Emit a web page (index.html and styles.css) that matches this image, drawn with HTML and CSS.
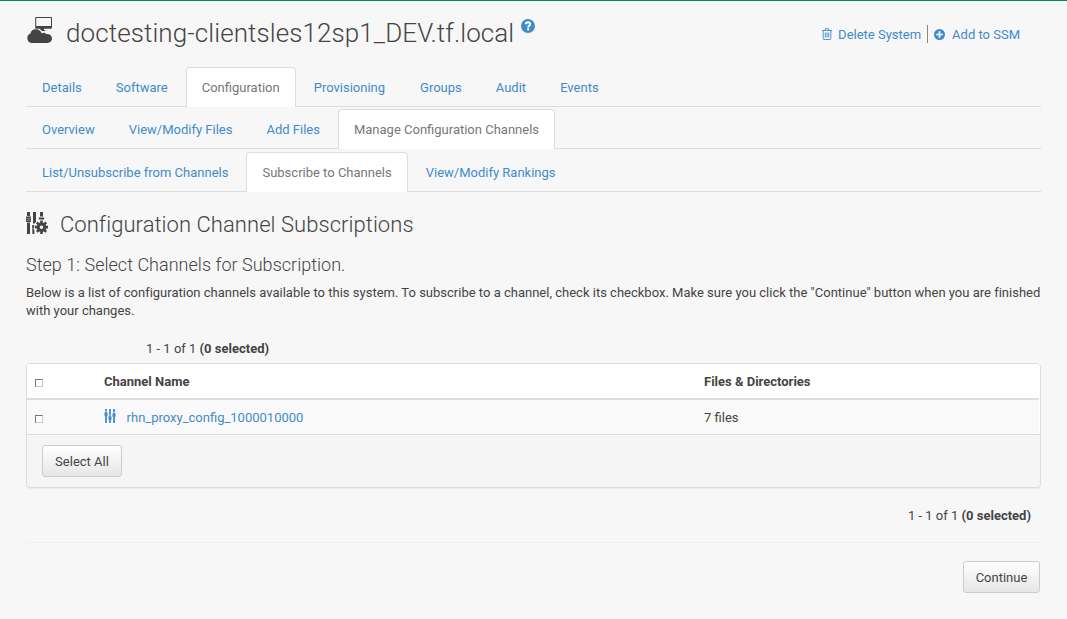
FILE: index.html
```html
<!DOCTYPE html>
<html lang="en">
<head>
<meta charset="utf-8">
<title>Configuration Channel Subscriptions</title>
<link rel="stylesheet" href="styles.css">
</head>
<body>
<main class="page">
  <header class="header">
    <svg class="system-icon" viewBox="0 0 26 26"><path fill="#444" fill-rule="evenodd" d="M10.2 0h15a.8.8 0 0 1 .8.8v9.800a1.200 1.200 0 0 1-1.200 1.200H18v1l2 1.200h-4L13.600 11.800H9.200V1a1 1 0 0 1 1-1zM10.200 1v8h14.800V1z"/><path fill="#444" d="M5 26a5 5 0 0 1-.6-9.400C4.800 13.500 7.500 12 10 12.200c3 .1 5 1.600 5.700 4.200 1.500-1.200 3.300-1 4.700.8a4.500 4.500 0 0 1 5.600 4.400c0 2.600-2 4.400-4.600 4.400z"/></svg>
    <h1 class="title">doctesting-clientsles12sp1_DEV.tf.local</h1>
    <svg class="help-icon" viewBox="0 0 14 14"><circle cx="7" cy="7" r="7" fill="#428bca"/><path d="M4.800 5.200C4.900 2.700 9.300 2.700 9.200 5.200c0 1.500-2 1.400-2 3.200" fill="none" stroke="#fff" stroke-width="2"/><path fill="#fff" d="M6.100 9.300h2.100v2H6.100z"/></svg>
    <nav class="actions">
      <a class="action"><svg class="trash-icon" viewBox="0 0 10 12"><path d="M0 2.500h10M3 2.500l.6-1.900h2.800L7 2.500M1.200 2.500v8.200q0 .8.800.8h6q.8 0 .8-.8V2.500M3.300 4.500v5M5 4.500v5M6.700 4.500v5" fill="none" stroke="#428bca" stroke-width=".9"/></svg>Delete System</a>
      <a class="action action-add"><svg class="plus-icon" viewBox="0 0 11 11"><circle cx="5.500" cy="5.500" r="5.500" fill="#428bca"/><path d="M5.500 2.300v6.400M2.300 5.500h6.400" stroke="#fff" stroke-width="1.700"/></svg>Add to SSM</a>
    </nav>
  </header>
  <nav class="tabs tabs-first"><a class="tab">Details</a><a class="tab">Software</a><a class="tab active">Configuration</a><a class="tab tab-wide">Provisioning</a><a class="tab">Groups</a><a class="tab">Audit</a><a class="tab">Events</a></nav>
  <nav class="tabs tabs-second"><a class="tab">Overview</a><a class="tab">View/Modify Files</a><a class="tab">Add Files</a><a class="tab active">Manage Configuration Channels</a></nav>
  <nav class="tabs tabs-third"><a class="tab">List/Unsubscribe from Channels</a><a class="tab active">Subscribe to Channels</a><a class="tab">View/Modify Rankings</a></nav>
  <div class="section-head">
    <svg class="config-icon" viewBox="0 0 22 22"><g fill="#444"><path d="M1 0h3v4H1zM0 4.500h5V10H0zM1 10.500h3V22H1zM7 0h3v10L8.500 11.500H7zM6.200 13h2v2l-.8 1.500 1 2V22h-2zM14 0h3v4.500h-3zM12.800 5.500h5.400v2h-5.400z"/><path fill-rule="evenodd" d="M14.200 8.500h2.600v2l1 .4 1.500-1.400 1.700 1.700-1.300 1.500.4 1.100H22v2.700h-1.900l-.4 1 1.300 1.500-1.700 1.800-1.500-1.400-1 .4V22h-2.600v-2.200l-1-.4-1.500 1.400-1.700-1.800 1.300-1.500-.4-1H8.900v-2.700h2l.4-1.100-1.300-1.500 1.700-1.700 1.500 1.400 1-.4zM15.500 13.400a1.800 1.800 0 1 0 0 3.600 1.800 1.800 0 0 0 0-3.600z"/></g><path d="M0 6.500h5M0 8.300h5" stroke="#bbb" stroke-width=".5"/></svg>
    <h2 class="section-title">Configuration Channel Subscriptions</h2>
  </div>
  <h3 class="step">Step 1: Select Channels for Subscription.</h3>
  <p class="summary">Below is a list of configuration channels available to this system. To subscribe to a channel, check its checkbox. Make sure you click the "Continue" button when you are finished with your changes.</p>
  <div class="count count-top">1 - 1 of 1 <strong>(0 selected)</strong></div>
  <section class="panel">
    <div class="row row-head"><span class="check"></span><span class="name">Channel Name</span><span class="files">Files &amp; Directories</span></div>
    <div class="row row-item"><span class="check"></span><a class="name link"><svg class="channel-icon" viewBox="0 0 12 14"><path d="M2 0v14M6 0v14M10 0v14" stroke="#428bca" stroke-width="1.800"/><path d="M.5 3.200h3v3.600h-3zM4.500 7.300h3v3.600h-3zM8.500 4.200h3v3.600h-3z" fill="#428bca"/><path d="M.4 2.700h3.200M4.400 6.800h3.200M8.400 3.700h3.200" stroke="#f9f9f9" stroke-width=".6"/></svg>rhn_proxy_config_1000010000</a><span class="files">7 files</span></div>
    <div class="panel-foot"><button class="btn">Select All</button></div>
  </section>
  <div class="count count-bottom">1 - 1 of 1 <strong>(0 selected)</strong></div>
  <div class="submit"><button class="btn btn-continue">Continue</button></div>
</main>
</body>
</html>
```
FILE: styles.css
```css
* { box-sizing: border-box; }
body { margin: 0; background: #f7f7f7; color: #444; font: 13px/18px Roboto, sans-serif; }
h1, h2, h3, p { margin: 0; font-weight: 300; }
svg { display: block; flex: none; }
.page { height: 619px; padding: 0 26px; border-top: 1px solid #008b5d; }
.header { display: flex; height: 66px; }
.system-icon { width: 26px; height: 26px; margin-top: 16px; }
.title { margin: 14px 0 0 14px; width: 448px; font-size: 26px; line-height: 36px; letter-spacing: .09px; white-space: nowrap; }
.help-icon { width: 14px; height: 14px; margin: 18px 0 0 7px; }
.actions { display: flex; margin: 24px 21px 0 auto; height: 18px; }
.action { display: flex; align-items: center; height: 20px; color: #428bca; white-space: nowrap; }
.action-add { height: 18px; padding: 2px 0 0 6px; border-left: 1px solid #888; margin-left: 6px; }
.trash-icon { width: 10px; height: 12px; margin: -2px 6px 0 0; }
.plus-icon { width: 11px; height: 11px; margin: -1px 7px 0 0; }
.tabs { display: flex; height: 40px; border-bottom: 1px solid #ddd; }
.tabs-second { margin-top: 2px; }
.tabs-third { margin-top: 3px; }
.tab { height: 40px; margin-right: 2px; padding: 11px 15px 0; border: 1px solid transparent; border-bottom: 0; color: #428bca; white-space: nowrap; }
.tab-wide { margin-right: 3px; }
.tab.active { background: #fff; border-color: #ddd; border-radius: 4px 4px 0 0; color: #777; }
.section-head { display: flex; height: 30px; margin-top: 17px; }
.config-icon { width: 22px; height: 22px; margin-top: 3px; }
.section-title { margin: 1px 0 0 12px; font-size: 22px; line-height: 30px; letter-spacing: .05px; }
.step { margin-top: 14px; font-size: 18px; line-height: 24px; letter-spacing: .02px; }
.summary { margin-top: 7px; font-weight: 400; letter-spacing: .005px; }
.count-top { margin: 20px 0 0 120px; }
.panel { margin-top: 5px; height: 125px; border: 1px solid #ddd; border-radius: 4px; background: #f5f5f5; box-shadow: 0 1px 1px rgba(0,0,0,.05); overflow: hidden; }
.row { display: grid; grid-template-columns: 77px 600px 1fr; align-items: center; }
.row-head { height: 36px; padding-top: 2px; margin-right: 1px; background: #fff; border-bottom: 2px solid #ddd; box-shadow: 1px 0 #fff; font-weight: 700; }
.row-item { height: 35px; padding-top: 2px; background: #f9f9f9; border-bottom: 1px solid #ddd; box-shadow: inset -1px 0 #fff; }
.check { width: 8px; height: 8px; margin: 2px 0 0 8px; border: 1px solid #c8c8c8; border-top-color: #777; border-left-color: #777; background: #fff; }
.link { display: flex; align-items: center; color: #428bca; }
.channel-icon { width: 12px; height: 14px; margin: -4px 10.6px 0 0; }
.panel-foot { padding: 10px 15px; }
.btn { display: block; width: 80px; height: 32px; padding: 2px 0 0; border: 1px solid #ccc; border-radius: 3px; background: linear-gradient(#fff, #e6e6e6); color: #444; font: inherit; }
.count-bottom { margin-top: 19px; padding-right: 10px; text-align: right; }
.submit { display: flex; justify-content: flex-end; margin-top: 17px; padding: 18px 1px 0; border-top: 1px solid #eee; }
.btn-continue { width: 77px; }
```
